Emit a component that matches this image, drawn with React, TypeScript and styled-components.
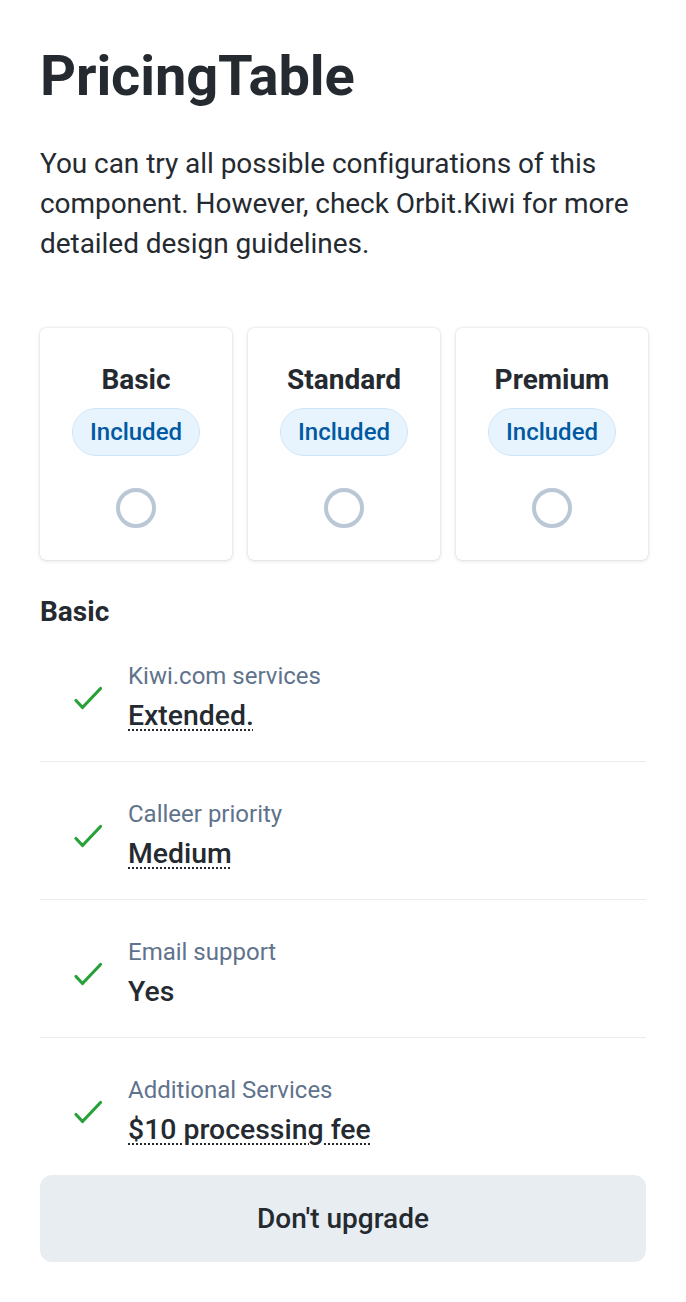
import React from "react";
import styled, { createGlobalStyle } from "styled-components";

const GlobalStyle = createGlobalStyle`
  * { box-sizing: border-box; }
  html, body { margin: 0; padding: 0; background: #ffffff; }
  body { font-family: Roboto, "Noto Sans", "Liberation Sans", sans-serif; color: #252a31; }
`;

const Page = styled.div`
  padding: 40px 40px 40px;
  display: flex;
  flex-direction: column;
`;

const Title = styled.h1`
  margin: 0;
  font-size: 56px;
  line-height: 72px;
  font-weight: 700;
  letter-spacing: -0.1px;
  color: #252a31;
`;

const Intro = styled.p`
  margin: 32px 0 0;
  font-size: 28px;
  line-height: 40px;
  font-weight: 400;
  letter-spacing: -0.05px;
  color: #252a31;
`;

const Cards = styled.div`
  margin-top: 64px;
  margin-right: -2px;
  display: grid;
  grid-template-columns: repeat(3, 1fr);
  gap: 16px;
`;

const Card = styled.div`
  height: 232px;
  padding-top: 34px;
  border-radius: 6px;
  background: #fff;
  box-shadow: 0 0 2px 0 rgba(37, 42, 49, 0.16), 0 1px 4px 0 rgba(37, 42, 49, 0.12);
  display: flex;
  flex-direction: column;
  align-items: center;
`;

const CardTitle = styled.div`
  font-size: 28px;
  line-height: 36px;
  font-weight: 700;
  color: #252a31;
`;

const Badge = styled.div`
  margin-top: 10px;
  height: 48px;
  padding: 0 17px;
  border-radius: 24px;
  border: 1.5px solid #cfe6f9;
  background: #e8f4fd;
  color: #005aa3;
  font-size: 24px;
  font-weight: 500;
  display: flex;
  align-items: center;
  justify-content: center;
`;

const Radio = styled.div`
  margin-top: 32px;
  width: 40px;
  height: 40px;
  border-radius: 50%;
  border: 4px solid #bac7d5;
  background: #fff;
`;

const SectionTitle = styled.h2`
  margin: 40px 0 0;
  font-size: 28px;
  line-height: 24px;
  font-weight: 700;
  color: #252a31;
`;

const List = styled.div`
  display: flex;
  flex-direction: column;
`;

const Row = styled.div<{ $last?: boolean }>`
  display: flex;
  align-items: center;
  gap: 20px;
  padding: 36px 0 25px 32px;
  border-bottom: ${(p) => (p.$last ? "none" : "1px solid #e8edf1")};
`;

const IconBox = styled.div`
  width: 36px;
  height: 36px;
  flex: none;
  display: flex;
`;

const RowText = styled.div`
  display: flex;
  flex-direction: column;
`;

const Label = styled.div`
  font-size: 24px;
  line-height: 32px;
  color: #5f738c;
  margin-bottom: 4px;
`;

const Value = styled.div<{ $dotted?: boolean }>`
  font-size: 28.4px;
  line-height: 40px;
  font-weight: 500;
  color: #252a31;
  span {
    text-decoration: ${(p) => (p.$dotted ? "underline dotted" : "none")};
    text-decoration-thickness: 2px;
    text-underline-offset: 4px;
  }
`;

const Button = styled.button`
  margin-top: 0;
  width: 100%;
  height: 87px;
  border: none;
  border-radius: 12px;
  background: #e8edf1;
  color: #252a31;
  font-family: Roboto, "Noto Sans", "Liberation Sans", sans-serif;
  font-size: 28px;
  font-weight: 500;
  cursor: pointer;
`;

const Check = () => (
  <svg width="36" height="36" viewBox="0 0 36 36" fill="none">
    <polyline
      points="4,20.5 10.5,27.5 28.5,8.5"
      stroke="#28a138"
      strokeWidth="3.2"
      strokeLinecap="round"
      strokeLinejoin="round"
    />
  </svg>
);

const plans = ["Basic", "Standard", "Premium"];

const features = [
  { label: "Kiwi.com services", value: "Extended.", dotted: true },
  { label: "Calleer priority", value: "Medium", dotted: true },
  { label: "Email support", value: "Yes", dotted: false },
  { label: "Additional Services", value: "$10 processing fee", dotted: true },
];

export default function App() {
  return (
    <>
      <GlobalStyle />
      <Page>
        <Title>PricingTable</Title>
        <Intro>
          You can try all possible configurations of this component. However, check Orbit.Kiwi for more
          detailed design guidelines.
        </Intro>
        <Cards>
          {plans.map((p) => (
            <Card key={p}>
              <CardTitle>{p}</CardTitle>
              <Badge>Included</Badge>
              <Radio />
            </Card>
          ))}
        </Cards>
        <SectionTitle>Basic</SectionTitle>
        <List>
          {features.map((f, i) => (
            <Row key={f.label} $last={i === features.length - 1}>
              <IconBox>
                <Check />
              </IconBox>
              <RowText>
                <Label>{f.label}</Label>
                <Value $dotted={f.dotted}>
                  <span>{f.value}</span>
                </Value>
              </RowText>
            </Row>
          ))}
        </List>
        <Button>Don't upgrade</Button>
      </Page>
    </>
  );
}
